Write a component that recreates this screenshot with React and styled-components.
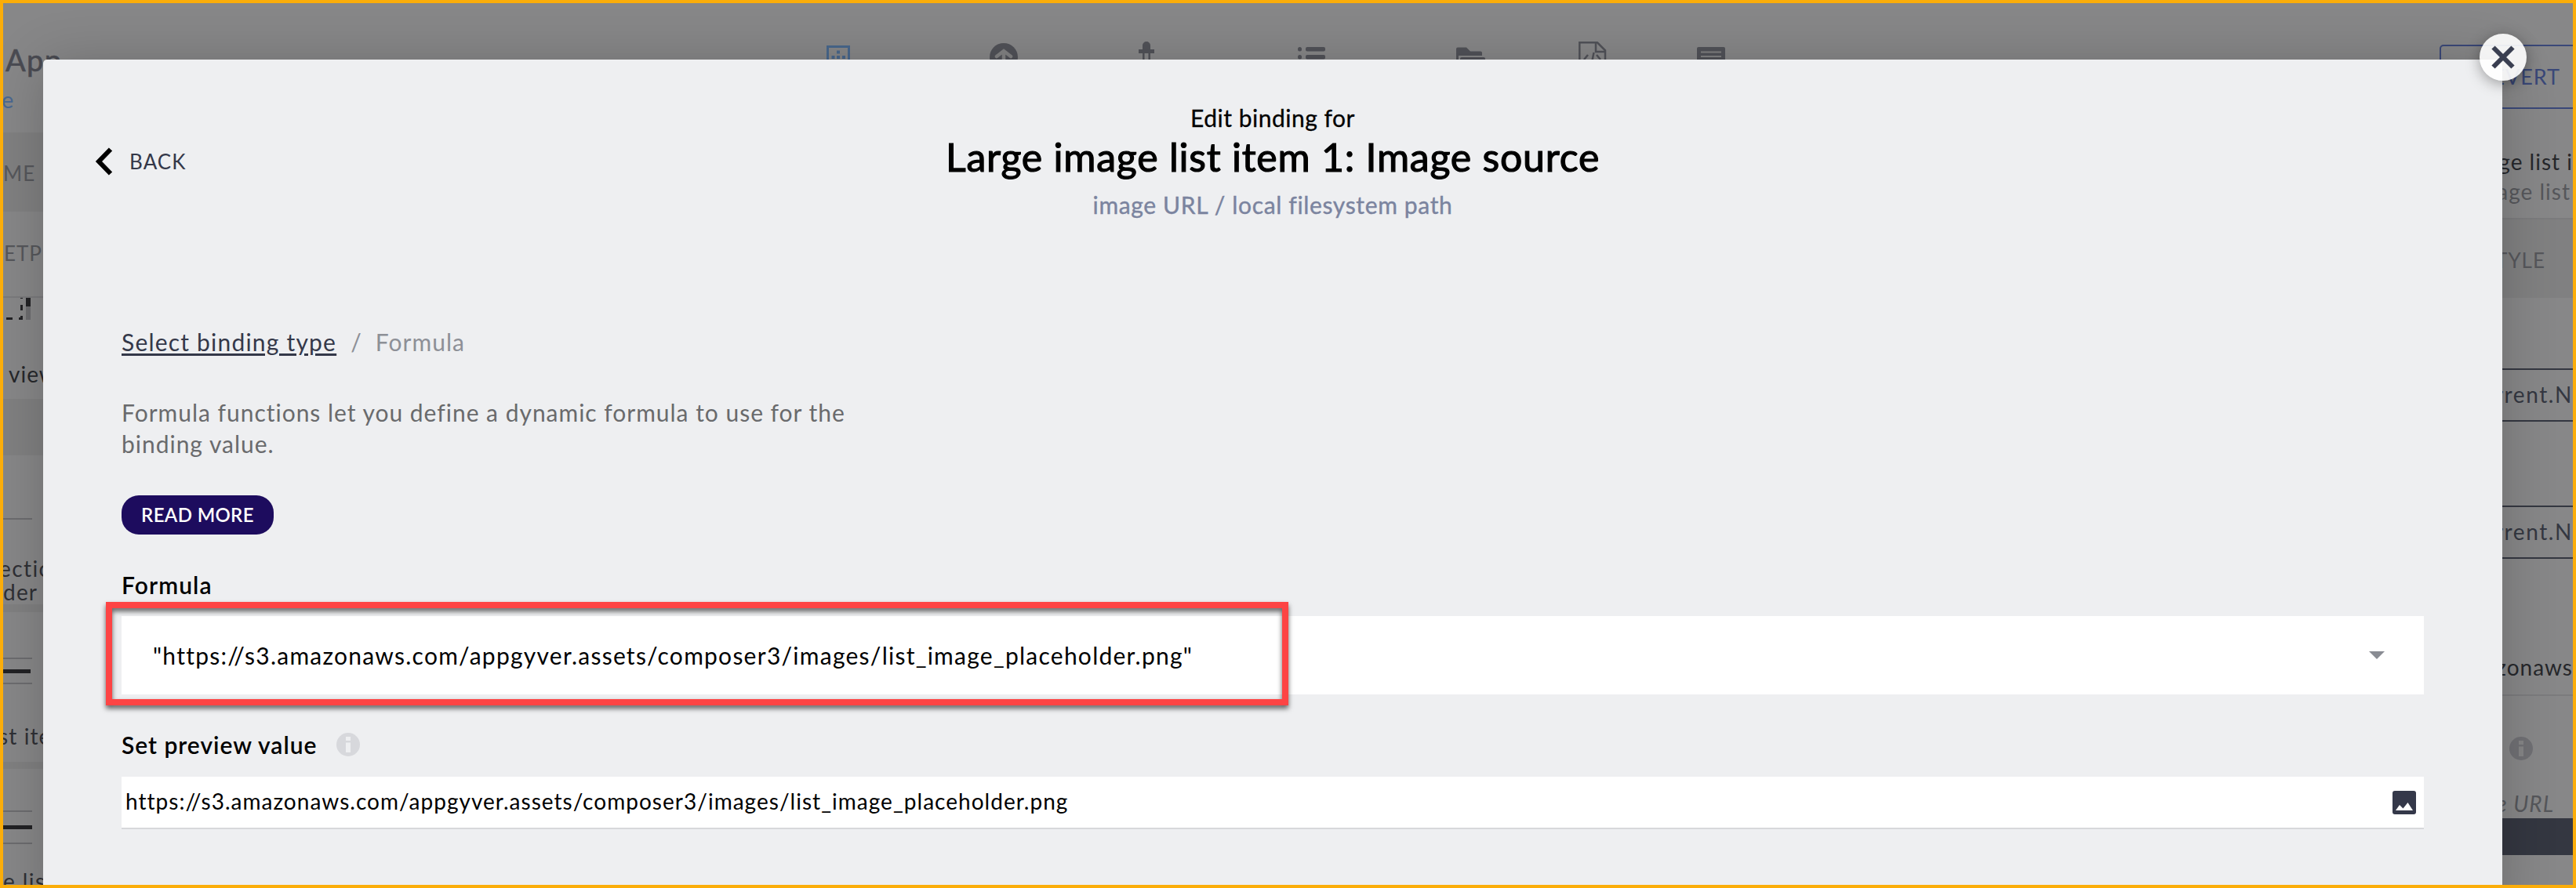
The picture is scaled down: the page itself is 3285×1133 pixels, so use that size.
import React from "react";
import styled, { createGlobalStyle, css } from "styled-components";

const Global = createGlobalStyle`
  * { box-sizing: border-box; }
  body { margin: 0; }
`;

const Frame = styled.div`
  position: relative;
  width: 3285px;
  height: 1133px;
  overflow: hidden;
  border: 4px solid #fbad09;
  background: #878788;
  font-family: Lato, "Open Sans", sans-serif;
  color: #26272b;
`;

/* ---------- dimmed builder behind the dialog ---------- */

const Builder = styled.div`
  display: flex;
  flex-direction: column;
  height: 100%;
`;

const TopBar = styled.header`
  display: flex;
  align-items: flex-start;
  height: 165px;
`;

const Brand = styled.div`
  width: 1047px;
  padding: 48px 0 0 3px;
`;

const AppName = styled.div`
  font-size: 38px;
  line-height: 48px;
  color: #4a4b52;
  letter-spacing: 1.4px;
  -webkit-text-stroke: 0.6px currentColor;
`;

const AppLink = styled.div`
  margin: 7px 0 0 -5px;
  font-size: 29px;
  line-height: 40px;
  color: #4a6891;
`;

const Tools = styled.nav`
  display: flex;
  padding-top: 48px;
  color: #515258;
`;

const Tool = styled.div`
  width: 36px;
  height: 40px;
  margin-right: ${(p) => p.$gap || 0}px;
  svg { display: block; }
`;

const Revert = styled.div`
  width: 190px;
  height: 82px;
  margin: 53px -20px 0 auto;
  padding-right: 34px;
  border: 2px solid #3a4878;
  border-radius: 5px;
  color: #3a4878;
  font-size: 27px;
  line-height: 77px;
  text-align: right;
  letter-spacing: 1px;
`;

const Workspace = styled.div`
  display: flex;
  justify-content: space-between;
  flex: 1;
  min-height: 0;
`;

const Side = styled.aside`
  display: flex;
  flex-direction: column;
  width: ${(p) => p.$width}px;
  overflow: hidden;
  white-space: nowrap;
`;

const Block = styled.div`
  flex: none;
  height: ${(p) => p.$h}px;
  padding-top: ${(p) => p.$top || 0}px;
  padding-left: ${(p) => p.$left || 0}px;
  padding-right: ${(p) => p.$right || 0}px;
  ${(p) => p.$band && css`background: #808081;`}
  ${(p) => p.$rule && css`border-bottom: 2px solid #7b7b7d;`}
  ${(p) => p.$end && css`text-align: right;`}
`;

const Tag = styled.div`
  font-size: 26px;
  line-height: 36px;
  color: #56575b;
  letter-spacing: 1px;
`;

const Caption = styled.div`
  padding-right: ${(p) => p.$right || 0}px;
  font-size: 28px;
  line-height: ${(p) => p.$line || 30}px;
  color: ${(p) => p.$tone || "#26272b"};
  letter-spacing: ${(p) => p.$track || 1}px;
  text-indent: ${(p) => p.$indent || 0}px;
  font-style: ${(p) => (p.$italic ? "italic" : "normal")};
`;

const Stroke = styled.div`
  width: ${(p) => p.$w || 37}px;
  height: ${(p) => (p.$bold ? 5 : 2)}px;
  margin-top: ${(p) => p.$gap || 0}px;
  background: ${(p) => (p.$bold ? "#222225" : "#6c6c6f")};
`;

const Binding = styled.div`
  height: 68px;
  border-top: 2px solid #343741;
  border-bottom: 2px solid #343741;
  color: #343741;
  font-size: 28px;
  line-height: 62px;
  letter-spacing: 1.6px;
  text-align: right;
`;

const DarkStrip = styled.div`
  height: 47px;
  background: #343741;
`;

/* ---------- dialog ---------- */

const Dialog = styled.section`
  position: absolute;
  left: 51px;
  top: 72px;
  width: 3136px;
  height: 1100px;
  border-radius: 5px;
  background: #eeeff1;
  box-shadow: 0 4px 70px rgba(0, 0, 0, 0.2);
`;

const DialogHead = styled.div`
  display: grid;
  grid-template-columns: 1fr auto 1fr;
  height: 340px;
  padding-top: 56px;
`;

const Back = styled.div`
  display: flex;
  align-items: center;
  gap: 21px;
  height: 36px;
  margin-top: 56px;
  padding-left: 66px;
  font-size: 26px;
  line-height: 36px;
  color: #343849;
  letter-spacing: ${(p) => p.$track}px;
`;

const Heading = styled.div`
  text-align: center;
`;

const Kicker = styled.div`
  height: 38px;
  font-size: 30px;
  line-height: 36px;
  color: #000;
  letter-spacing: ${(p) => p.$track}px;
  -webkit-text-stroke: 0.3px currentColor;
`;

const Title = styled.h1`
  margin: 0;
  font-size: 50px;
  line-height: 60px;
  font-weight: 400;
  color: #000;
  letter-spacing: ${(p) => p.$track}px;
  -webkit-text-stroke: 1.2px currentColor;
`;

const Subtitle = styled.div`
  margin-top: 13px;
  font-size: 30px;
  line-height: 36px;
  color: #7b849f;
  letter-spacing: ${(p) => p.$track}px;
  -webkit-text-stroke: 0.4px currentColor;
`;

const DialogBody = styled.div`
  padding: 0 100px;
`;

const Crumbs = styled.div`
  display: flex;
  height: 40px;
  font-size: 30px;
  line-height: 40px;
  color: #8d9097;
`;

const CrumbLink = styled.span`
  color: #343849;
  text-decoration: underline;
  text-decoration-thickness: 3px;
  text-underline-offset: 3px;
  letter-spacing: ${(p) => p.$track}px;
`;

const Crumb = styled.span`
  margin-left: ${(p) => p.$gap}px;
  letter-spacing: ${(p) => p.$track || 0}px;
`;

const Intro = styled.p`
  width: 960px;
  margin: 50px 0 46px;
  font-size: 30px;
  line-height: 40px;
  color: #696a6c;
  letter-spacing: ${(p) => p.$track}px;
`;

const ReadMore = styled.button`
  display: block;
  width: 194px;
  height: 50px;
  padding: 0;
  border: 0;
  border-radius: 22px;
  background: #1d0c5e;
  color: #fff;
  font: 600 24px/50px Lato, sans-serif;
  letter-spacing: ${(p) => p.$track}px;
`;

const Label = styled.div`
  display: flex;
  align-items: center;
  gap: 25px;
  height: 36px;
  margin-top: 46px;
  font-size: 30px;
  line-height: 36px;
  font-weight: 600;
  color: #000;
  letter-spacing: ${(p) => p.$track}px;
`;

const FormulaField = styled.div`
  position: relative;
  display: flex;
  align-items: center;
  justify-content: space-between;
  height: 100px;
  margin-top: 22px;
  padding: 0 50px 0 40px;
  background: #fff;
  color: #000;
  font-size: 30px;
  letter-spacing: ${(p) => p.$track}px;
`;

const Highlight = styled.div`
  position: absolute;
  left: -20px;
  top: -18px;
  width: 1508px;
  height: 132px;
  border: 8px solid #fd4444;
  filter: drop-shadow(0 4px 3px rgba(0, 0, 0, 0.6));
`;

const PreviewField = styled.div`
  display: flex;
  align-items: center;
  justify-content: space-between;
  height: 67px;
  margin-top: 23px;
  padding: 0 10px 0 5px;
  border-bottom: 2px solid #d7d8db;
  background: #fff;
  color: #000;
`;

const PreviewText = styled.span`
  padding-bottom: 3px;
  font-size: 28px;
  letter-spacing: ${(p) => p.$track}px;
`;

const Close = styled.button`
  position: absolute;
  right: -31px;
  top: -33px;
  display: flex;
  align-items: center;
  justify-content: center;
  width: 60px;
  height: 60px;
  padding: 0;
  border: 0;
  border-radius: 50%;
  background: rgba(255, 255, 255, 0.9);
  box-shadow: 0 4px 18px rgba(0, 0, 0, 0.35);
`;

const InfoIcon = ({ fill, mark }) => (
  <svg width="30" height="30" viewBox="0 0 30 30">
    <circle cx="15" cy="15" r="15" fill={fill} />
    <path d="M12 5h6v5h-6zM12 12.500h6V25h-6z" fill={mark} />
  </svg>
);

export default function App() {
  return (
    <Frame>
      <Global />
      <Builder>
        <TopBar>
          <Brand>
            <AppName>App</AppName>
            <AppLink>e</AppLink>
          </Brand>
          <Tools>
            <Tool $gap={175}>
              <svg width="36" height="40" fill="none" stroke="#48678c">
                <path d="M4.500 7.500h27v34h-27z" strokeWidth="3" />
                <path d="M16 14.500h4M9.500 21h4M16 21h4M23 21h4" strokeWidth="4" />
              </svg>
            </Tool>
            <Tool $gap={146}>
              <svg width="36" height="40">
                <circle cx="18" cy="21" r="18" fill="currentColor" />
                <path d="M9 20l9-7 9 7M18 14v16" fill="none" stroke="#828283" strokeWidth="4.500" strokeLinecap="round" />
              </svg>
            </Tool>
            <Tool $gap={175}>
              <svg width="36" height="40" fill="currentColor">
                <path d="M13 6a5 5 0 0 1 10 0v5h5v5H8v-5h5z" />
                <path d="M14.300 16v20M21.700 16v20" stroke="currentColor" strokeWidth="2.500" />
              </svg>
            </Tool>
            <Tool $gap={166}>
              <svg width="36" height="40" fill="currentColor">
                <rect x="0" y="8" width="5" height="5.500" rx="2.500" />
                <rect x="10" y="8" width="25" height="5.500" rx="2" />
                <rect x="0" y="18" width="5" height="5.500" rx="2.500" />
                <rect x="10" y="18" width="25" height="5.500" rx="2" />
              </svg>
            </Tool>
            <Tool $gap={120}>
              <svg width="38" height="40" fill="currentColor">
                <path d="M0 10.500q0-2 2-2h11l5 5h13q2 0 2 2V19H3v12H0z" />
                <path d="M5 23q0-2 2-2h28q2 0 2 2v12H5z" />
              </svg>
            </Tool>
            <Tool $gap={115}>
              <svg width="36" height="40" fill="none" stroke="currentColor" strokeWidth="2.500">
                <path d="M1.300 40V2.300H24l10 10V40M22 2v12h12" />
                <path d="M12 18l-5 6M19.500 15l-2 10M23 18l5 6" />
              </svg>
            </Tool>
            <Tool>
              <svg width="36" height="40" fill="currentColor">
                <path d="M0 10q0-2 2-2h32q2 0 2 2v30H0z" />
                <path d="M5 14.500h26M5 20h26" stroke="#818182" strokeWidth="2.200" />
              </svg>
            </Tool>
          </Tools>
          <Revert>REVERT</Revert>
        </TopBar>
        <Workspace>
          <Side $width={160}>
            <Block $h={101} $band $top={34}><Tag>ME</Tag></Block>
            <Block $h={110} $rule $top={35} $left={1}><Tag>ETP</Tag></Block>
            <Block $h={129} $left={4}>
              <svg width="36" height="34" style={{ display: "block" }} fill="#222225">
                <path d="M0 25h8v3H0zM18 0h3v1h-3zM18 9h3v7h-3zM18 23h3v5h-5v-3h2zM25 0h6v11h-6z" />
                <path d="M25 11h6v17h-6z" fill="#6c6c6f" />
              </svg>
              <Block $h={95} $top={48} $left={3}><Caption>view</Caption></Block>
            </Block>
            <Block $h={72} $band />
            <Block $h={190} $top={80}>
              <Stroke />
              <Block $h={90} $top={47}>
                <Caption $tone="#2f3035" $track={1.4} $indent={-5}>ectio</Caption>
                <Caption $tone="#2f3035" $track={1.2}>der</Caption>
              </Block>
            </Block>
            <Block $h={10} $band />
            <Block $h={191} $top={58}>
              <Stroke />
              <Stroke $bold $w={35} $gap={13} />
              <Stroke $gap={12} />
              <Block $h={80} $top={51}><Caption $tone="#2f3035" $track={1.1} $indent={-6}>st item</Caption></Block>
            </Block>
            <Block $h={9} $band />
            <Block $h={148} $top={53}>
              <Stroke />
              <Stroke $bold $gap={17} />
              <Stroke $gap={17} />
              <Block $h={60} $top={32}><Caption $tone="#2f3035" $track={1.4}>e list</Caption></Block>
            </Block>
          </Side>
          <Side $width={240}>
            <Block $h={111} $rule $end $top={18}>
              <Caption $line={38}>Large image list i</Caption>
              <Caption $line={38} $tone="#56575b" $right={3}>Large image list</Caption>
            </Block>
            <Block $h={100} $band $end $top={34} $right={35}><Tag>STYLE</Tag></Block>
            <Block $h={175} $top={90}><Binding>current.N</Binding></Block>
            <Block $h={153} $top={90}><Binding>current.N</Binding></Block>
            <Block $h={90} />
            <Block $h={90} $rule $end $top={38}><Caption>amazonaws</Caption></Block>
            <Block $h={156} $top={52} $end>
              <Block $h={62} $right={51}><InfoIcon fill="#707074" mark="#858586" /></Block>
              <Block $h={42} $top={8} $right={24}><Caption $italic $tone="#56575b">image URL</Caption></Block>
            </Block>
            <DarkStrip />
          </Side>
        </Workspace>
      </Builder>

      <Dialog>
        <DialogHead>
          <Back $track={1.1}>
            <svg width="23" height="36" viewBox="0 0 23 36" fill="none" stroke="#000" strokeWidth="6">
              <path d="M20 2.500L5 18l15 15.500" />
            </svg>
            BACK
          </Back>
          <Heading>
            <Kicker $track={0.5}>Edit binding for</Kicker>
            <Title $track={0.77}>Large image list item 1: Image source</Title>
            <Subtitle $track={0.65}>image URL / local filesystem path</Subtitle>
          </Heading>
        </DialogHead>
        <DialogBody>
          <Crumbs>
            <CrumbLink $track={1.2}>Select binding type</CrumbLink>
            <Crumb $gap={18}>/</Crumb>
            <Crumb $gap={18} $track={1.05}>Formula</Crumb>
          </Crumbs>
          <Intro $track={0.98}>
            Formula functions let you define a dynamic formula to use for the<br />binding value.
          </Intro>
          <ReadMore $track={0.35}>READ MORE</ReadMore>
          <Label $track={1.1}>Formula</Label>
          <FormulaField $track={1.25}>
            "https://s3.amazonaws.com/appgyver.assets/composer3/images/list_image_placeholder.png"
            <svg width="20" height="10"><path d="M0 0h20L10 10z" fill="#898c93" /></svg>
            <Highlight />
          </FormulaField>
          <Label $track={0.97}>
            Set preview value
            <InfoIcon fill="#d7d8dc" mark="#eeeff1" />
          </Label>
          <PreviewField>
            <PreviewText $track={1.02}>
              https://s3.amazonaws.com/appgyver.assets/composer3/images/list_image_placeholder.png
            </PreviewText>
            <svg width="30" height="30">
              <rect width="30" height="30" rx="3" fill="#343849" />
              <path d="M4 25l5-7 4.500 4.500L19.500 15 26 25z" fill="#fff" />
            </svg>
          </PreviewField>
        </DialogBody>
        <Close>
          <svg width="30" height="30" fill="none" stroke="#3a3f51" strokeWidth="6">
            <path d="M2.500 2.500l25 25M27.500 2.500l-25 25" />
          </svg>
        </Close>
      </Dialog>
    </Frame>
  );
}
